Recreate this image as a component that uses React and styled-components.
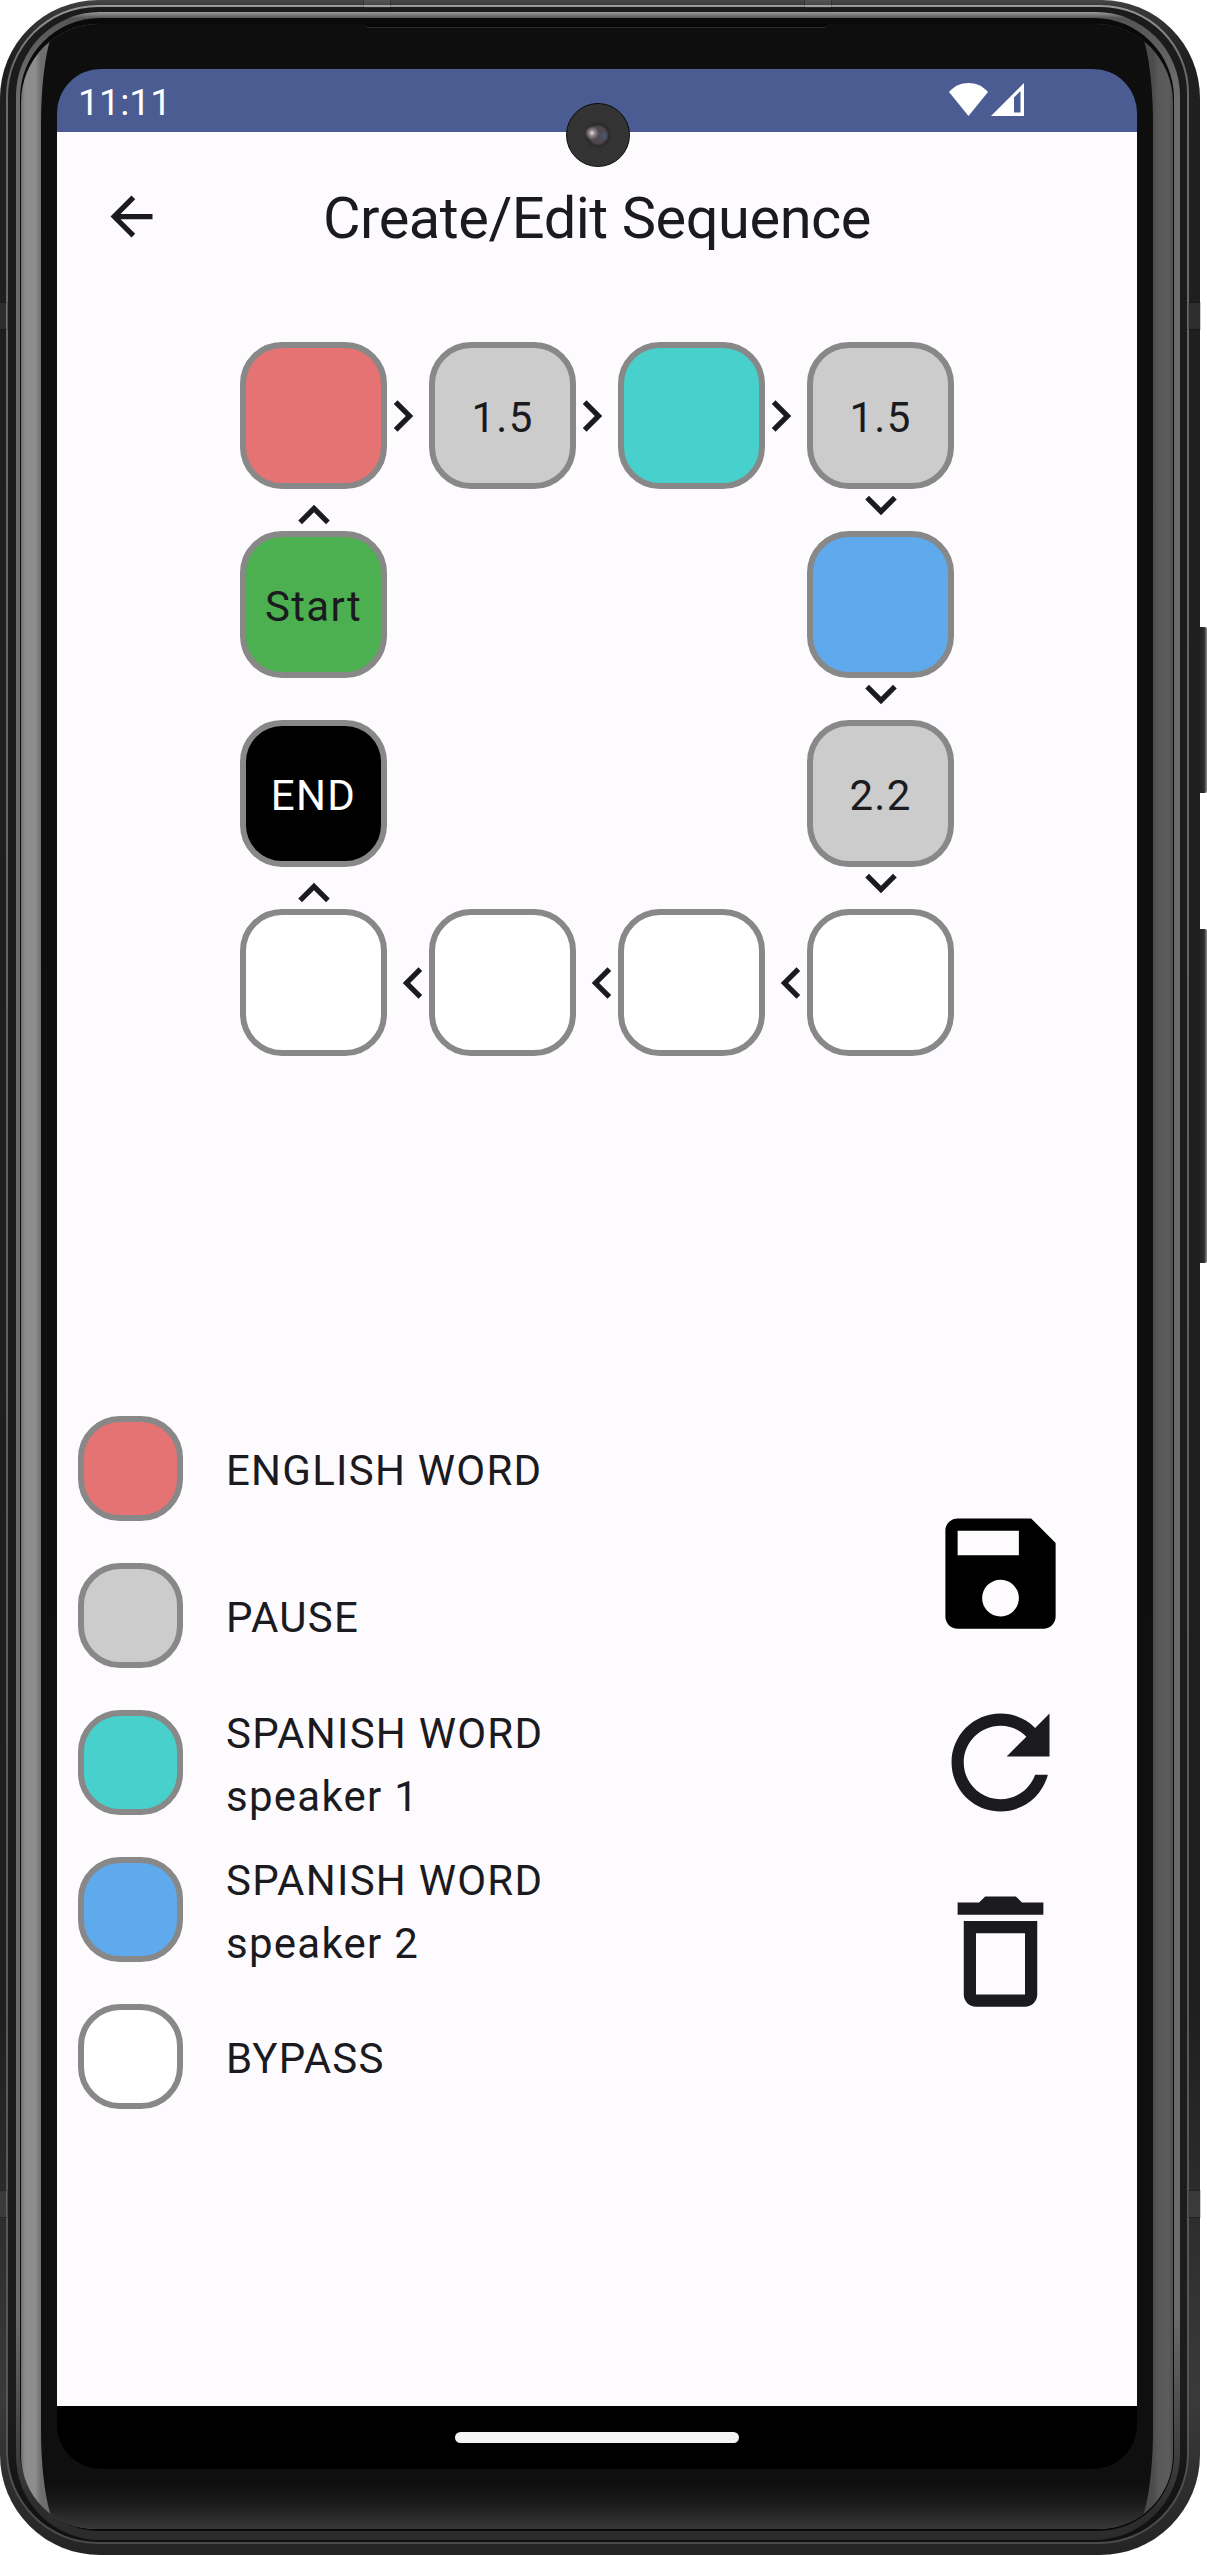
import React from "react";
import styled, { createGlobalStyle } from "styled-components";

const GlobalStyle = createGlobalStyle`
  * { box-sizing: border-box; }
  body { margin: 0; background: #ffffff; font-family: Roboto, "Liberation Sans", sans-serif; }
`;

const colors = {
  ink: "#1b1b1f",
  surface: "#fefbff",
  primary: "#4a5c92",
  english: "#e57373",
  pause: "#cccccc",
  speaker1: "#48d1cc",
  speaker2: "#5eaaec",
  start: "#4caf50",
  end: "#000000",
  bypass: "#ffffff",
};

/* ---------- device body ---------- */

const Page = styled.div`
  position: relative;
  width: 1207px;
  height: 2555px;
  overflow: hidden;
`;

const Ring = styled.div`
  position: relative;
  height: 100%;
  padding: ${(p) => p.$pad};
  border-radius: ${(p) => p.$radius};
  background: ${(p) => p.$fill};
`;

const Body = styled.div`
  position: relative;
  width: 1200px;
  height: 2555px;
`;

const Glass = styled.div`
  position: relative;
  height: 100%;
  padding: 0 20px;
  overflow: hidden;
  border-radius: 78px 78px 74px 74px;
  background: linear-gradient(
    to right,
    #6f6f6f 0,
    #8c8c8c 4px,
    #8e8e8e 14px,
    #6e6e6e 20px,
    #4c4c4c 1132px,
    #585858 1137px,
    #5c5c5c 1148px,
    #4e4e4e 1152px
  );
`;

const Bezel = styled.div`
  height: 100%;
  padding: 45px 16px 62px;
  border-radius: 20px / 100px;
  background: linear-gradient(to bottom, #0e0e0e 0, #0f0f0f 2460px, #1a1a1a 2478px, #3a3a3a 2507px);
`;

const Speaker = styled.div`
  position: absolute;
  top: 0;
  left: 344px;
  width: 463px;
  height: 4px;
  background: #070707;
  border-bottom: 1px solid #2c2c2c;
  border-radius: 0 0 6px 6px;
`;

const SideKey = styled.div`
  position: absolute;
  left: 1198px;
  top: ${(p) => p.$top}px;
  width: 9px;
  height: ${(p) => p.$height}px;
  border-radius: 0 2px 2px 0;
  background: linear-gradient(to right, #202020, #2b2b2b 6px, #6a6a6a 8px, #8c8c8c);
`;

const Band = styled.div`
  position: absolute;
  left: ${(p) => p.$x}px;
  top: ${(p) => p.$y}px;
  width: ${(p) => p.$w}px;
  height: ${(p) => p.$h}px;
  background: rgba(255, 255, 255, 0.07);
  box-shadow: 0 0 0 1px rgba(0, 0, 0, 0.18);
`;

/* ---------- screen ---------- */

const Screen = styled.main`
  display: flex;
  flex-direction: column;
  position: relative;
  width: 1080px;
  height: 2400px;
  border-radius: 44px;
  overflow: hidden;
  background: linear-gradient(
    ${colors.primary} 63px,
    ${colors.surface} 63px 2337px,
    #000000 2337px
  );
  color: ${colors.ink};
`;

const StatusBar = styled.div`
  flex: none;
  display: flex;
  justify-content: space-between;
  height: 63px;
  padding: 0 113px 0 21px;
  color: #ffffff;
`;

const Clock = styled.span`
  font-size: 37.5px;
  line-height: 66px;
`;

const StatusIcons = styled.div`
  display: flex;
  gap: 3px;
  padding-top: 14px;
`;

const Camera = styled.div`
  position: absolute;
  left: 509px;
  top: 34px;
  width: 64px;
  height: 64px;
  border-radius: 50%;
  border: 1.5px solid #0a0a0a;
  background:
    radial-gradient(circle at 25px 29px, #e8e0e4 0, #8f858c 3px, rgba(90, 82, 92, 0) 7px),
    radial-gradient(circle at 37px 32px, #46587a 0, rgba(70, 80, 110, 0) 5px),
    radial-gradient(circle at 31px 31px, #51484f 0 8px, #2a2a2a 11px, #333333 14px, #343434);
`;

const AppBar = styled.header`
  flex: none;
  display: grid;
  grid-template-columns: 63px 1fr 63px;
  align-items: center;
  height: 168px;
  padding: 0 43px;
`;

const Title = styled.h1`
  margin: 0;
  padding-top: 4px;
  text-align: center;
  font-size: 57.75px;
  font-weight: 400;
  line-height: 74px;
  letter-spacing: -0.45px;
`;

const Icon = styled.svg`
  display: block;
  width: ${(p) => p.$size}px;
  height: ${(p) => p.$size}px;
  fill: ${(p) => p.$color || colors.ink};
`;

const Track = styled.section`
  flex: none;
  display: grid;
  grid-template-columns: 147px 42px 147px 42px 147px 42px 147px;
  grid-template-rows: 147px 42px 147px 42px 147px 42px 147px;
  place-items: center;
  padding: 42px 0 0 183px;
`;

const Swatch = styled.div`
  display: flex;
  align-items: center;
  justify-content: center;
  flex: none;
  width: ${(p) => p.$size}px;
  height: ${(p) => p.$size}px;
  padding-top: 4px;
  border: 6px solid #888888;
  border-radius: 42px;
  background: ${(p) => p.$fill};
  color: ${(p) => p.$color || colors.ink};
  font-size: 42px;
  line-height: 63px;
  letter-spacing: 1.31px;
`;

const Tile = styled(Swatch)`
  grid-column: ${(p) => p.$col};
  grid-row: ${(p) => p.$row};
`;

const Chevron = styled(Icon)`
  grid-column: ${(p) => p.$col};
  grid-row: ${(p) => p.$row};
`;

const Lower = styled.section`
  flex: 1;
  display: flex;
  justify-content: space-between;
  padding: 350px 63px 0 21px;
`;

const Legend = styled.ul`
  display: flex;
  flex-direction: column;
  gap: 22px;
  margin: 0;
  padding: 0;
  list-style: none;
`;

const LegendRow = styled.li`
  display: flex;
  align-items: center;
  gap: 43px;
  height: 125px;
`;

const LegendText = styled.div`
  padding-top: 4px;
  font-size: 42px;
  line-height: 63px;
  letter-spacing: 1.25px;
  white-space: pre-line;
`;

const Actions = styled.div`
  display: flex;
  flex-direction: column;
  gap: 42px;
  padding-top: 94px;
`;

const IconButton = styled.button`
  padding: 0;
  border: 0;
  background: none;
`;

const NavBar = styled.div`
  flex: none;
  display: flex;
  align-items: center;
  justify-content: center;
  height: 63px;
`;

const NavHandle = styled.div`
  width: 284px;
  height: 11px;
  border-radius: 6px;
  background: #f4f4f4;
`;

const chevronShapes = {
  right: { box: "6 4 16 16", d: "M10 6L8.59 7.41 13.17 12l-4.58 4.59L10 18l6-6z" },
  left: { box: "2 4 16 16", d: "M15.41 7.41L14 6l-6 6 6 6 1.41-1.41L10.83 12z" },
  up: { box: "4 2 16 16", d: "M12 8l-6 6 1.41 1.41L12 10.83l4.59 4.58L18 14z" },
  down: { box: "4 6 16 16", d: "M16.59 8.59L12 13.17 7.41 8.59 6 10l6 6 6-6z" },
};

const tiles = [
  { col: 1, row: 1, fill: colors.english },
  { col: 3, row: 1, fill: colors.pause, label: "1.5" },
  { col: 5, row: 1, fill: colors.speaker1 },
  { col: 7, row: 1, fill: colors.pause, label: "1.5" },
  { col: 1, row: 3, fill: colors.start, label: "Start" },
  { col: 7, row: 3, fill: colors.speaker2 },
  { col: 1, row: 5, fill: colors.end, color: "#ffffff", label: "END" },
  { col: 7, row: 5, fill: colors.pause, label: "2.2" },
  { col: 1, row: 7, fill: colors.bypass },
  { col: 3, row: 7, fill: colors.bypass },
  { col: 5, row: 7, fill: colors.bypass },
  { col: 7, row: 7, fill: colors.bypass },
];

const chevrons = [
  { col: 2, row: 1, dir: "right" },
  { col: 4, row: 1, dir: "right" },
  { col: 6, row: 1, dir: "right" },
  { col: 1, row: 2, dir: "up" },
  { col: 7, row: 2, dir: "down" },
  { col: 7, row: 4, dir: "down" },
  { col: 7, row: 6, dir: "down" },
  { col: 1, row: 6, dir: "up" },
  { col: 2, row: 7, dir: "left" },
  { col: 4, row: 7, dir: "left" },
  { col: 6, row: 7, dir: "left" },
];

const legend = [
  { fill: colors.english, text: "ENGLISH WORD" },
  { fill: colors.pause, text: "PAUSE" },
  { fill: colors.speaker1, text: "SPANISH WORD\nspeaker 1" },
  { fill: colors.speaker2, text: "SPANISH WORD\nspeaker 2" },
  { fill: colors.bypass, text: "BYPASS" },
];

const actions = [
  {
    name: "Save",
    color: "#000000",
    d: "M17 3H5c-1.11 0-2 .9-2 2v14c0 1.1.89 2 2 2h14c1.1 0 2-.9 2-2V7l-4-4zm-5 16c-1.66 0-3-1.34-3-3s1.34-3 3-3 3 1.34 3 3-1.34 3-3 3zm3-10H5V5h10v4z",
  },
  {
    name: "Reset",
    d: "M17.65 6.35C16.2 4.9 14.21 4 12 4c-4.42 0-7.99 3.58-7.99 8s3.57 8 7.99 8c3.73 0 6.84-2.55 7.73-6h-2.08c-.82 2.33-3.04 4-5.65 4-3.31 0-6-2.69-6-6s2.69-6 6-6c1.66 0 3.14.69 4.22 1.78L13 11h7V4l-2.35 2.35z",
  },
  {
    name: "Delete",
    d: "M6 19c0 1.1.9 2 2 2h8c1.1 0 2-.9 2-2V7H6v12zM8 9h8v10H8V9zm7.5-5l-1-1h-5l-1 1H5v2h14V4h-3.5z",
  },
];

function SequenceScreen() {
  return (
    <Screen>
      <StatusBar>
        <Clock>11:11</Clock>
        <StatusIcons>
          <svg width="39" height="33" viewBox="0 0 39 33" fill="#fff">
            <path d="M19.5 33L0 9C5 3.2 12 0 19.5 0S34 3.2 39 9z" />
          </svg>
          <svg width="33" height="33" viewBox="0 0 33 33" fill="#fff" fillRule="evenodd">
            <path d="M33 0v33H0zM23 14.5V29.5h6.5V8z" />
          </svg>
        </StatusIcons>
      </StatusBar>
      <AppBar>
        <Icon $size={63} viewBox="0 0 24 24">
          <path d="M20 11H7.83l5.59-5.59L12 4l-8 8 8 8 1.41-1.41L7.83 13H20v-2z" />
        </Icon>
        <Title>Create/Edit Sequence</Title>
      </AppBar>
      <Track>
        {tiles.map((t) => (
          <Tile key={`${t.col}-${t.row}`} $size={147} $col={t.col} $row={t.row} $fill={t.fill} $color={t.color}>
            {t.label}
          </Tile>
        ))}
        {chevrons.map((c) => (
          <Chevron key={`${c.col}-${c.row}`} $size={42} $col={c.col} $row={c.row} viewBox={chevronShapes[c.dir].box}>
            <path d={chevronShapes[c.dir].d} />
          </Chevron>
        ))}
      </Track>
      <Lower>
        <Legend>
          {legend.map((item, i) => (
            <LegendRow key={i}>
              <Swatch $size={105} $fill={item.fill} />
              <LegendText>{item.text}</LegendText>
            </LegendRow>
          ))}
        </Legend>
        <Actions>
          {actions.map((a) => (
            <IconButton key={a.name} aria-label={a.name}>
              <Icon $size={147} $color={a.color} viewBox="0 0 24 24">
                <path d={a.d} />
              </Icon>
            </IconButton>
          ))}
        </Actions>
      </Lower>
      <NavBar>
        <NavHandle />
      </NavBar>
      <Camera />
    </Screen>
  );
}

export default function App() {
  return (
    <Page>
      <GlobalStyle />
      <SideKey $top={627} $height={166} />
      <SideKey $top={929} $height={334} />
      <Body>
        <Ring
          $pad="5px 11px 11px 6px"
          $radius="98px 98px 100px 100px"
          $fill="linear-gradient(to bottom, #484848 0, #3a3a3a 5px, #1f1f1f 60px, #1e1e1e 2000px, #3a3a3a 2400px, #242424 2555px)"
        >
          <Ring
            $pad="2px"
            $radius="92px 88px 90px 92px"
            $fill="linear-gradient(to bottom, #9a9a9a 0, #6a6a6a 60px, #555555 2400px, #4a4a4a)"
          >
            <Ring $pad="5px 7px 2px 8px" $radius="90px 86px 88px 90px" $fill="linear-gradient(#1b1b1b, #1c1c1c 2400px, #101010)">
              <Ring
                $pad="6px 6px 9px 4px"
                $radius="84px 84px 86px 84px"
                $fill="linear-gradient(to bottom, #9c9c9c 0, #555555 6px, #6c6c6c 70px, #6c6c6c 2300px, #2c2c2c 2500px)"
              >
                <Ring $pad="6px 1px 2px 1px" $radius="80px 80px 76px 80px" $fill="#0a0a0a">
                  <Glass>
                    <Bezel>
                      <SequenceScreen />
                    </Bezel>
                    <Speaker />
                  </Glass>
                </Ring>
              </Ring>
            </Ring>
          </Ring>
        </Ring>
        <Band $x={364} $y={0} $w={26} $h={8} />
        <Band $x={805} $y={0} $w={26} $h={8} />
        <Band $x={0} $y={303} $w={7} $h={26} />
        <Band $x={1189} $y={303} $w={11} $h={26} />
        <Band $x={0} $y={2191} $w={7} $h={26} />
        <Band $x={1189} $y={2191} $w={11} $h={26} />
      </Body>
    </Page>
  );
}
